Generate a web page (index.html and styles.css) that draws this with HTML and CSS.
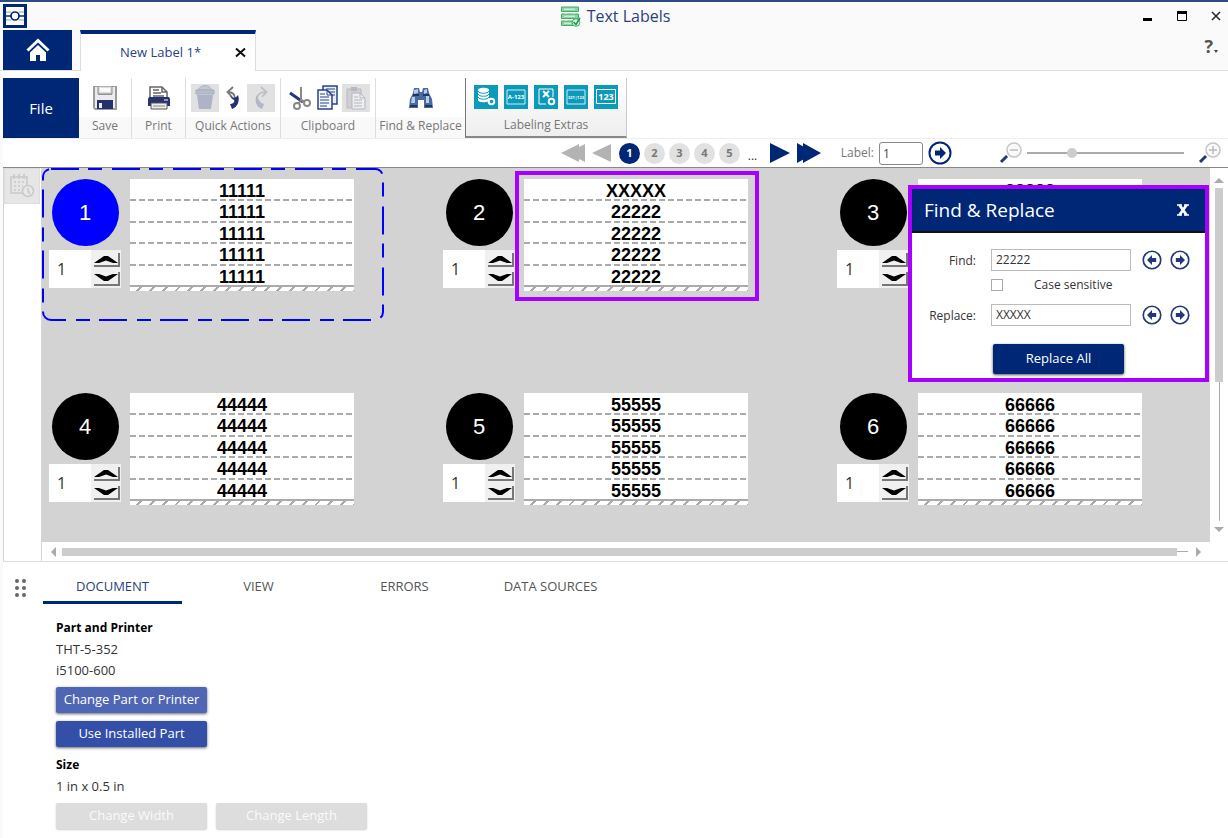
FILE: index.html
```html
<!DOCTYPE html>
<html lang="en">
<head>
<meta charset="utf-8">
<title>Text Labels</title>
<link rel="stylesheet" href="styles.css">
</head>
<body>
<svg width="0" height="0" class="defs" aria-hidden="true">
  <symbol id="up" viewBox="0 0 28 15"><path d="M0 0H28V15H0Z" fill="#f0f0f0"/><path d="M26 1V14H1" fill="none" stroke="#777" stroke-width="2"/><path d="M1 11 11 4H15L25 11H20L13 8.500 6 11Z"/></symbol>
  <symbol id="down" viewBox="0 0 28 15"><path d="M0 0H28V15H0Z" fill="#f0f0f0"/><path d="M26 1V14H1" fill="none" stroke="#777" stroke-width="2"/><path d="M1 3 11 10H15L25 3H20L13 5.500 6 3Z"/></symbol>
  <symbol id="right" viewBox="0 0 24 24"><circle cx="12" cy="12" r="10.500" fill="#fff" stroke="currentColor" stroke-width="2"/><path d="M7 9.500H12V6L18 12 12 18V14.500H7Z" fill="currentColor"/></symbol>
  <symbol id="left" viewBox="0 0 24 24"><circle cx="12" cy="12" r="10.500" fill="#fff" stroke="currentColor" stroke-width="2"/><path d="M17 9.500H12V6L6 12 12 18V14.500H17Z" fill="currentColor"/></symbol>
</svg>
<div class="app">
  <header class="titlebar">
    <svg class="logo" viewBox="0 0 24 24"><path d="M1.500 1.500H22.500V22.500H1.500Z" fill="#fff" stroke="#002776" stroke-width="3"/><path d="M3 8H8M3 16H8M16 8H21M16 16H21" stroke="#8a98bd" fill="none"/><circle cx="12" cy="12" r="4" fill="none" stroke="#002776" stroke-width="1.700"/><path d="M3 12H8M16 12H21" stroke="#002776" stroke-width="1.500"/></svg>
    <h1 class="title"><svg width="20" height="21" viewBox="0 0 20 21"><g fill="#8ed0a5" stroke="#3fae67"><path d="M.5 1H17.500V5.500H.5ZM.5 8H17.500V12.500H.5ZM.5 15H17.500V19.500H.5Z"/></g><path d="M3 3.200H14M3 10.200H14M3 17.200H10M5 6V8M13 6V8M5 13V15" stroke="#e7f6eb" fill="none"/><circle cx="15" cy="16.500" r="3.800" fill="#dff3e5" stroke="#3fae67"/><path d="M12.500 16 15 18.500 19 12" stroke="#23954c" stroke-width="1.500" fill="none"/></svg>Text Labels</h1>
    <div class="window-buttons">
      <button aria-label="Minimize"><svg viewBox="0 0 10 10"><path d="M0 7H9V10H0Z"/></svg></button>
      <button aria-label="Maximize"><svg viewBox="0 0 10 10"><path d="M.5 1H9.500V9.500H.5Z" fill="none" stroke="#000"/><path d="M0 0H10V3H0Z"/></svg></button>
      <button aria-label="Close"><svg viewBox="0 0 10 10"><path d="M1 1 9 9M9 1 1 9" stroke="#222" stroke-width="1.500"/></svg></button>
    </div>
  </header>
  <nav class="doc-tabs">
    <button class="home" aria-label="Home"><svg width="24" height="24" viewBox="0 0 24 24"><path d="M1.500 12.500 12 2.500 22.500 12.500" fill="none" stroke="#fff" stroke-width="3"/><path d="M12 7 20 14.500V23H14V17H10V23H4V14.500Z" fill="#fff"/></svg></button>
    <div class="doc-tab"><span>New Label 1*</span><button aria-label="Close tab"><svg width="11" height="11" viewBox="0 0 11 11"><path d="M1 1.500 10 9.500M10 1.500 1 9.500" stroke="#111" stroke-width="2"/></svg></button></div>
    <button class="help" aria-label="Help">?<svg width="4" height="3" viewBox="0 0 4 3"><path d="M0 0H4L2 3Z" fill="#444"/></svg></button>
  </nav>
  <div class="ribbon">
    <button class="file">File</button>
    <section class="group save"><div class="tools"><button aria-label="Save"><svg width="24" height="24" viewBox="0 0 24 24"><path d="M0 0H24V24H2L0 22Z" fill="#9b9b9b"/><path d="M2 1H5V9H19V1H22V22H2Z" fill="#ececec"/><path d="M5 0H19V8H5Z" fill="#ddd" stroke="#888"/><path d="M7 2H17V6H7Z" fill="#fafafa"/><path d="M4 14H20V23H4Z" fill="#25316f"/><path d="M6 17H9V22H6Z" fill="#eee"/></svg></button></div><p>Save</p></section>
    <section class="group print"><div class="tools"><button aria-label="Print"><svg width="24" height="24" viewBox="0 0 24 24"><path d="M3 12V1H15L20 6V12" fill="#fff" stroke="#666" stroke-width="1.500"/><path d="M15 1V6H20M6 4H12M6 7H14M6 10H17" fill="none" stroke="#666" stroke-width="1.500"/><path d="M2 11H22L23 13V20H1V13Z" fill="#26336f"/><path d="M17 14H21" stroke="#fff"/><path d="M4 17H20V23H4Z" fill="#eee" stroke="#555"/><path d="M6 20H18" stroke="#888"/></svg></button></div><p>Print</p></section>
    <section class="group quick"><div class="tools">
      <button class="off" disabled aria-label="Delete"><svg width="20" height="25" viewBox="0 0 20 25"><path d="M3 5C6-1 14-1 17 5Z" fill="#c5c8d1" stroke="#aeb3c2"/><path d="M1 5H19V9H1Z" fill="#b9bdca" stroke="#a7adbe"/><path d="M2 10H18L16 24H4Z" fill="#aeb3c5"/></svg></button>
      <button aria-label="Undo"><svg width="14" height="24" viewBox="0 0 14 24"><path d="M7 1 1.500 6 6 11M2 6C7 6 9 8 9 13" fill="none" stroke="#777" stroke-width="1.800"/><path d="M4 9C7 13 10 12 12 9C14 14 12 21 6 23L4 18C7 18 9 16 8 14C6 13 5 12 4 9Z" fill="#243273"/></svg></button>
      <button class="off" disabled aria-label="Redo"><svg width="14" height="24" viewBox="0 0 14 24"><path d="M7 1 12.500 6 8 11M12 6C7 6 3 8 3 13" fill="none" stroke="#bfc0c6" stroke-width="1.800"/><path d="M3 9C0 14 2 21 8 23L10 18C6 17 4 13 3 9Z" fill="#b3b6c4"/></svg></button>
    </div><p>Quick Actions</p></section>
    <section class="group clip"><div class="tools">
      <button aria-label="Cut"><svg width="22" height="24" viewBox="0 0 22 24"><path d="M1 7 14 16" stroke="#25377b" stroke-width="3"/><path d="M12 1V14L9 18M12 14 16 16" stroke="#888" stroke-width="2" fill="none"/><circle cx="8" cy="20" r="3" fill="#fff" stroke="#888" stroke-width="2"/><circle cx="18" cy="17" r="3" fill="#fff" stroke="#888" stroke-width="2"/></svg></button>
      <button aria-label="Copy"><svg width="22" height="25" viewBox="0 0 22 25"><path d="M6 1H20V19H6Z" fill="#e8eefb" stroke="#24428a" stroke-width="1.500"/><path d="M9 4H18M9 7H18M9 10H18" stroke="#24428a"/><path d="M1 5H10L15 10V24H1Z" fill="#f5f8ff" stroke="#24428a" stroke-width="1.500"/><path d="M10 5V10H15M3 9H8M3 12H12M3 15H12M3 18H12M3 21H10" fill="none" stroke="#24428a"/></svg></button>
      <button class="off" disabled aria-label="Paste"><svg width="20" height="24" viewBox="0 0 20 24"><path d="M1 3H15V22H1Z" fill="#d0d0d2" stroke="#b8b9bf"/><path d="M5 1H11V5H5Z" fill="#b8b9bf"/><path d="M6 7H14L19 12V23H6Z" fill="#eee" stroke="#b4b7c2"/><path d="M14 7V12H19M8 11H12M8 14H16M8 17H16M8 20H16" fill="none" stroke="#b4b7c2"/></svg></button>
    </div><p>Clipboard</p></section>
    <section class="group find"><div class="tools"><button aria-label="Find and replace"><svg width="24" height="22" viewBox="0 0 24 22"><path d="M5 1H10L11 5H13L14 1H19L20 6 23 12 24 21H15V13H9V21H0L1 12 4 6Z" fill="#496a9f"/><path d="M5 3 9 2 9 6 5 7ZM15 3 18 2 18 6 15 7ZM3 10H6V16H2ZM17 9H20V16H17Z" fill="#b8cbe8"/><path d="M1 19H8M16 19H23M4 8H10M14 8H20" stroke="#203764" stroke-width="2"/></svg></button></div><p>Find &amp; Replace</p></section>
    <section class="group extras"><div class="tools">
      <button aria-label="Data source"><svg width="24" height="24" viewBox="0 0 24 24"><path d="M0 0H24V24H0Z" fill="#0b9aba"/><path d="M4 5V15C4 18 15 18 15 15V5C15 2 4 2 4 5" fill="#fff"/><path d="M4 6C5 9 14 9 15 6M4 9C5 12 14 12 15 9M4 12C5 15 14 15 15 12" stroke="#0b9aba" fill="none"/><circle cx="17.500" cy="16.500" r="2.800" fill="#0b9aba" stroke="#fff" stroke-width="2"/></svg></button>
      <button aria-label="Alphanumeric"><svg width="24" height="24" viewBox="0 0 24 24"><path d="M0 0H24V24H0Z" fill="#0b9aba"/><path d="M3 5H21V19H3Z" fill="none" stroke="#cfeef5"/><text x="12" y="14" class="tiny">A-123</text></svg></button>
      <button aria-label="Import"><svg width="24" height="24" viewBox="0 0 24 24"><path d="M0 0H24V24H0Z" fill="#0b9aba"/><path d="M12 19H5V4H19V12" fill="none" stroke="#fff"/><path d="M9 6 15 12M15 6 9 12" stroke="#fff" stroke-width="2"/><circle cx="17.500" cy="16.500" r="2.800" fill="#0b9aba" stroke="#fff" stroke-width="2"/></svg></button>
      <button aria-label="Mirrored sequence"><svg width="24" height="24" viewBox="0 0 24 24"><path d="M0 0H24V24H0Z" fill="#0b9aba"/><path d="M3 5H21V19H3Z" fill="none" stroke="#cfeef5"/><text x="12" y="14" class="micro">321|123</text></svg></button>
      <button aria-label="Sequence"><svg width="24" height="24" viewBox="0 0 24 24"><path d="M0 0H24V24H0Z" fill="#0b9aba"/><path d="M2.500 4.500H21.500V18.500H2.500Z" fill="none" stroke="#fff"/><text x="12" y="15" class="digits">123</text></svg></button>
    </div><p>Labeling Extras</p></section>
  </div>
  <div class="pager">
    <div class="pages">
      <button class="gray" aria-label="First page"><svg width="24" height="18" viewBox="0 0 24 18"><path d="M0 9 18 0V18ZM6 9 24 0V18Z"/></svg></button>
      <button class="gray" aria-label="Previous page"><svg width="20" height="18" viewBox="0 0 20 18"><path d="M0 9 19 0V18Z"/></svg></button>
      <button class="page current">1</button><button class="page">2</button><button class="page">3</button><button class="page">4</button><button class="page">5</button>
      <span class="more">...</span>
      <button class="navy" aria-label="Next page"><svg width="20" height="20" viewBox="0 0 20 20"><path d="M0 0 20 10 0 20Z"/></svg></button>
      <button class="navy" aria-label="Last page"><svg width="24" height="20" viewBox="0 0 24 20"><path d="M0 0 18 10 0 20ZM6 0 24 10 6 20Z"/></svg></button>
    </div>
    <div class="jump"><label for="jump">Label:</label><input type="text" id="jump" value="1"><button class="go" aria-label="Go to label"><svg width="24" height="24"><use href="#right"/></svg></button></div>
    <div class="zoom">
      <button aria-label="Zoom out"><svg width="24" height="24" viewBox="0 0 24 24"><path d="M2 21 8 15" stroke="#25377b" stroke-width="3"/><circle cx="15" cy="9" r="7" fill="#fafafa" stroke="#c4c4c4" stroke-width="1.500"/><path d="M11 9H19" stroke="#bbb" stroke-width="1.500"/></svg></button>
      <input type="range" aria-label="Zoom" min="0" max="100" value="27">
      <button class="zoom-in" aria-label="Zoom in"><svg width="24" height="24" viewBox="0 0 24 24"><path d="M2 21 8 15" stroke="#25377b" stroke-width="3"/><circle cx="15" cy="9" r="7" fill="#fafafa" stroke="#c4c4c4" stroke-width="1.500"/><path d="M11 9H19M15 5V13" stroke="#bbb" stroke-width="1.500"/></svg></button>
    </div>
  </div>
  <main class="workspace">
    <aside class="rail"><button disabled aria-label="Schedule"><svg width="26" height="24" viewBox="0 0 26 24"><g fill="none" stroke="#c9c9c9" stroke-width="1.500"><path d="M14 19H2V3H18V12M5 0V5M10 0V5M15 0V5"/><path d="M5 8H16M5 12H14M5 16H12" stroke-dasharray="2 2"/><circle cx="19" cy="17" r="5.500" fill="#e8e8e8"/><path d="M19 14V17L21 20"/></g></svg></button></aside>
    <div class="canvas">
      <div class="labels">
        <article class="card selected">
          <svg class="selection" aria-hidden="true"><rect x="1" y="1" width="340" height="151" rx="8"/></svg>
          <div class="side"><b class="badge">1</b><div class="count"><input type="text" aria-label="Copies of label 1" value="1"><div class="steps"><button aria-label="More"><svg><use href="#up"/></svg></button><button aria-label="Fewer"><svg><use href="#down"/></svg></button></div></div></div>
          <div class="label"><ul><li>11111</li><li>11111</li><li>11111</li><li>11111</li><li>11111</li></ul><div class="hatch"></div></div>
        </article>
        <article class="card">
          <div class="side"><b class="badge">2</b><div class="count"><input type="text" aria-label="Copies of label 2" value="1"><div class="steps"><button aria-label="More"><svg><use href="#up"/></svg></button><button aria-label="Fewer"><svg><use href="#down"/></svg></button></div></div></div>
          <div class="label marked"><ul><li>XXXXX</li><li>22222</li><li>22222</li><li>22222</li><li>22222</li></ul><div class="hatch"></div></div>
        </article>
        <article class="card">
          <div class="side"><b class="badge">3</b><div class="count"><input type="text" aria-label="Copies of label 3" value="1"><div class="steps"><button aria-label="More"><svg><use href="#up"/></svg></button><button aria-label="Fewer"><svg><use href="#down"/></svg></button></div></div></div>
          <div class="label"><ul><li>33333</li><li></li><li></li><li></li><li></li></ul><div class="hatch"></div></div>
        </article>
        <article class="card">
          <div class="side"><b class="badge">4</b><div class="count"><input type="text" aria-label="Copies of label 4" value="1"><div class="steps"><button aria-label="More"><svg><use href="#up"/></svg></button><button aria-label="Fewer"><svg><use href="#down"/></svg></button></div></div></div>
          <div class="label"><ul><li>44444</li><li>44444</li><li>44444</li><li>44444</li><li>44444</li></ul><div class="hatch"></div></div>
        </article>
        <article class="card">
          <div class="side"><b class="badge">5</b><div class="count"><input type="text" aria-label="Copies of label 5" value="1"><div class="steps"><button aria-label="More"><svg><use href="#up"/></svg></button><button aria-label="Fewer"><svg><use href="#down"/></svg></button></div></div></div>
          <div class="label"><ul><li>55555</li><li>55555</li><li>55555</li><li>55555</li><li>55555</li></ul><div class="hatch"></div></div>
        </article>
        <article class="card">
          <div class="side"><b class="badge">6</b><div class="count"><input type="text" aria-label="Copies of label 6" value="1"><div class="steps"><button aria-label="More"><svg><use href="#up"/></svg></button><button aria-label="Fewer"><svg><use href="#down"/></svg></button></div></div></div>
          <div class="label"><ul><li>66666</li><li>66666</li><li>66666</li><li>66666</li><li>66666</li></ul><div class="hatch"></div></div>
        </article>
      </div>
      <form class="dialog" role="dialog" aria-labelledby="dialog-title">
        <header><h2 id="dialog-title">Find &amp; Replace</h2><button type="button" aria-label="Close dialog"><svg width="12" height="12" viewBox="0 0 12 12"><path d="M0 1H5M7 1H12M0 11H5M7 11H12" stroke="#fff" stroke-width="1.500"/><path d="M2.500 1 9.500 11M9.500 1 2.500 11" stroke="#fff" stroke-width="2.800"/></svg></button></header>
        <div class="fields">
          <label for="find">Find:</label><input type="text" id="find" value="22222"><div class="arrows"><button type="button" aria-label="Find previous"><svg><use href="#left"/></svg></button><button type="button" aria-label="Find next"><svg><use href="#right"/></svg></button></div>
          <div class="case"><input type="checkbox" id="case"><label for="case">Case sensitive</label></div>
          <label for="replace">Replace:</label><input type="text" id="replace" value="XXXXX"><div class="arrows"><button type="button" aria-label="Replace previous"><svg><use href="#left"/></svg></button><button type="button" aria-label="Replace next"><svg><use href="#right"/></svg></button></div>
        </div>
        <button type="button" class="replace-all">Replace All</button>
      </form>
    </div>
    <div class="vscroll"><i class="tri-up"></i><span class="thumb"></span><span class="line"></span><i class="tri-down"></i></div>
    <div class="hscroll"><i class="tri-left"></i><span class="thumb"></span><span class="line"></span><i class="tri-right"></i></div>
  </main>
  <section class="panel">
    <div class="panel-tabs">
      <svg class="grip" width="14" height="20" viewBox="0 0 14 20" fill="#666"><circle cx="3" cy="3" r="2"/><circle cx="10" cy="3" r="2"/><circle cx="3" cy="10" r="2"/><circle cx="10" cy="10" r="2"/><circle cx="3" cy="17" r="2"/><circle cx="10" cy="17" r="2"/></svg>
      <button class="active">DOCUMENT</button><button>VIEW</button><button>ERRORS</button><button>DATA SOURCES</button>
    </div>
    <div class="details">
      <h3>Part and Printer</h3>
      <p>THT-5-352</p>
      <p>i5100-600</p>
      <button class="action light">Change Part or Printer</button>
      <button class="action">Use Installed Part</button>
      <h3 class="size">Size</h3>
      <p>1 in x 0.5 in</p>
      <div class="pair"><button class="action" disabled>Change Width</button><button class="action" disabled>Change Length</button></div>
    </div>
  </section>
</div>
</body>
</html>
```

FILE: styles.css
```css
:root {
  --navy: #002776;
  --mark: #a600ff;
}
* { box-sizing: border-box; }
body {
  margin: 0;
  background: #fff;
  color: #333;
  font: 12px/16px "Open Sans", "Noto Sans", sans-serif;
}
button, input { font: inherit; color: inherit; margin: 0; padding: 0; border: 0; background: none; }
h1, h2, h3, p, ul { margin: 0; padding: 0; font-weight: 400; }
svg { display: block; }
.defs { position: absolute; }
.app { min-height: 100vh; padding-left: 3px; overflow: hidden; background: linear-gradient(90deg, #fafafa 3px, #fff 3px); }

/* title bar */
.titlebar {
  display: grid;
  grid-template-columns: 1fr auto 1fr;
  align-items: center;
  height: 30px;
  margin-left: -3px;
  padding-left: 3px;
  border-top: 2px solid #2b4a86;
  background: #fafafa;
}
.logo { width: 24px; height: 24px; }
.title { display: flex; align-items: center; gap: 6px; font-size: 16px; line-height: 22px; color: #2b3f80; }
.window-buttons { display: flex; justify-content: flex-end; gap: 24px; padding-right: 7px; }
.window-buttons svg { width: 10px; height: 10px; }

/* document tabs */
.doc-tabs {
  display: flex;
  align-items: flex-end;
  height: 41px;
  margin-left: -3px;
  padding-left: 3px;
  border-bottom: 1px solid #ddd;
  background: #fafafa;
}
.home { display: grid; place-items: center; width: 69px; height: 40px; background: var(--navy); }
.doc-tab {
  display: flex;
  justify-content: space-between;
  align-items: center;
  width: 176px;
  height: 41px;
  margin: 0 0 -1px 8px;
  padding: 0 9px 1px 39px;
  border: solid #ddd;
  border-width: 0 1px;
  border-top: 4px solid var(--navy);
  background: #fff;
  color: #2b3f80;
  font-size: 13px;
}
.help { display: flex; align-items: flex-end; gap: 1px; margin: 0 10px 12px auto; color: #555; font-size: 18px; font-weight: 700; line-height: 24px; }
.help svg { margin-bottom: 5px; }

/* ribbon */
.ribbon { display: flex; height: 68px; padding-top: 7px; border-bottom: 1px solid #eee; }
.file { width: 76px; background: var(--navy); color: #fff; font-size: 15px; }
.group { display: flex; flex-direction: column; border-right: 1px solid #ddd; }
.group p { height: 21px; padding-top: 1px; background: #f9f9f9; color: #777; text-align: center; white-space: nowrap; }
.tools { display: flex; flex: 1; justify-content: center; align-items: center; }
.tools button { display: grid; place-items: center; width: 28px; height: 28px; }
.tools .off { background: #e1e1e1; }
.save { width: 53px; }
.print { width: 54px; }
.quick, .clip { width: 95px; }
.find { width: 89px; border: 0; }
.extras { width: 162px; border: 0; border-right: 1px solid #ccc; border-left: 1px solid #777; border-bottom: 2px solid #888; background: linear-gradient(#fff, #eee); }
.extras .tools { gap: 2px; }
.extras p { height: 20px; background: none; }
.tiny, .micro, .digits { fill: #fff; text-anchor: middle; font-family: "Open Sans", sans-serif; font-weight: 700; }
.tiny { font-size: 6px; }
.micro { font-size: 4px; }
.digits { font-size: 9px; }

/* pager */
.pager { display: flex; justify-content: flex-end; align-items: center; height: 29px; padding-right: 6px; border-bottom: 1px solid #888; }
.pages { display: flex; align-items: center; gap: 4px; }
.gray { margin-right: 3px; fill: #b3b3b3; }
.navy { margin-right: 3px; fill: var(--navy); }
.page { width: 21px; height: 21px; border-radius: 50%; background: #e1e1e1; color: #777; font-size: 11px; font-weight: 700; }
.page.current { background: var(--navy); color: #fff; }
.more { align-self: flex-end; width: 22px; padding-left: 4px; }
.jump { display: flex; align-items: center; gap: 5px; margin-left: 17px; color: #777; }
.jump input { width: 44px; height: 23px; padding-left: 3px; border: 1px solid #888; border-radius: 3px; background: #fff; color: #444; }
.jump .go { color: var(--navy); }
.zoom { display: flex; align-items: center; gap: 4px; margin-left: 47px; }
.zoom input { appearance: none; width: 157px; height: 12px; background: linear-gradient(#aaa, #aaa) center / 100% 2px no-repeat; }
.zoom input::-webkit-slider-thumb { appearance: none; width: 10px; height: 10px; border-radius: 50%; background: #ccc; }
.zoom-in { margin-left: 10px; }

/* workspace */
.workspace {
  display: grid;
  grid-template: 374px 19px / 39px 1fr 18px;
  border-bottom: 1px solid #ddd;
}
.rail { grid-row: 1 / 3; border: solid #d5d5d5; border-width: 0 1px; }
.rail button { display: grid; place-items: center; width: 36px; height: 36px; border: 1px solid #ddd; background: #e6e6e6; }
.canvas { position: relative; background: #d3d3d3; }
.labels { display: grid; grid-template-columns: repeat(auto-fill, 342px); gap: 61px 52px; }
.card { position: relative; display: flex; gap: 9px; height: 153px; padding: 11px 0 0 7px; }
.selection { position: absolute; inset: 0; width: 342px; height: 153px; }
.selection rect { fill: none; stroke: #00f; stroke-width: 2; stroke-dasharray: 28 9 14 10; }
.side { display: flex; flex-direction: column; align-items: center; gap: 4px; width: 72px; }
.badge { display: grid; place-items: center; width: 67px; height: 67px; border-radius: 50%; background: #000; color: #fff; font: 22px "Liberation Sans", Arial, sans-serif; }
.selected .badge { background: #00f; }
.count { display: flex; width: 72px; height: 38px; background: #fff; }
.count input { width: 42px; padding-left: 8px; font-size: 16px; }
.steps { display: flex; flex-direction: column; align-items: flex-end; justify-content: space-around; width: 30px; background: #f0f0f0; }
.steps svg { width: 28px; height: 15px; }
.label { position: relative; width: 224px; height: 112px; }
.label ul { display: grid; grid-template-rows: repeat(5, 1fr); height: 108px; padding-top: 1px; background: #fff; list-style: none; }
.label li { padding-top: 1px; background: repeating-linear-gradient(90deg, #aaa 0 6px, #fff 6px 9px) bottom / 100% 2px no-repeat; color: #000; font: 700 18px/20px "Liberation Sans", Arial, sans-serif; text-align: center; }
.label li:last-child { background: linear-gradient(#aaa, #aaa) bottom / 100% 2px no-repeat; }
.hatch { height: 4px; background: repeating-linear-gradient(135deg, #fff 0 7px, #aaa 7px 9px); }
.marked::after { content: ""; position: absolute; inset: -8px -11px -10px -9px; border: 4px solid var(--mark); }

/* scroll bars */
.vscroll { display: flex; flex-direction: column; align-items: center; padding: 10px 0; }
.vscroll .thumb { width: 8px; height: 194px; margin-top: 5px; background: #ccc; }
.vscroll .line { flex: 1; width: 1px; margin-bottom: 6px; background: #aaa; }
.hscroll { display: flex; align-items: center; padding: 0 9px; }
.hscroll .thumb { flex: 1; height: 8px; margin-left: 6px; background: #ccc; }
.hscroll .line { width: 11px; height: 1px; margin-right: 8px; background: #aaa; }
.tri-up, .tri-down { border: 5px solid transparent; border-top-width: 0; border-bottom-color: #aaa; }
.tri-down { border-width: 5px 5px 0; border-top-color: #aaa; }
.tri-left, .tri-right { border: 5px solid transparent; border-left-width: 0; border-right-color: #aaa; }
.tri-right { border-width: 5px 0 5px 5px; border-left-color: #aaa; }

/* find and replace dialog */
.dialog { position: absolute; top: 17px; right: 1px; width: 301px; height: 197px; border: 4px solid var(--mark); background: #fff; }
.dialog header { display: flex; justify-content: space-between; align-items: center; height: 44px; padding: 0 16px 0 12px; border-bottom: 2px solid #111; background: var(--navy); color: #fff; }
.dialog h2 { font-size: 19px; line-height: 24px; }
.fields { display: grid; grid-template-columns: 68px 140px 48px; align-items: center; column-gap: 11px; padding-top: 16px; }
.fields > label { padding: 2px 4px 0 0; text-align: right; }
.fields > input { height: 22px; padding: 0 0 2px 4px; border: 1px solid #bbb; }
.arrows { display: flex; gap: 8px; color: #25377b; }
.arrows svg { width: 20px; height: 20px; }
.case { grid-column: 2 / 4; display: flex; align-items: center; gap: 31px; height: 33px; padding-bottom: 5px; white-space: nowrap; }
.case input { appearance: none; width: 12px; height: 12px; border: 1px solid #aaa; background: #fff; }
.replace-all { display: block; width: 131px; height: 30px; margin: 18px 0 0 81px; padding-bottom: 2px; border-radius: 2px; background: var(--navy); box-shadow: 0 1px 3px #555; color: #fff; font-size: 13px; }

/* bottom panel */
.panel-tabs { display: flex; align-items: center; gap: 7px; height: 42px; padding-left: 11px; }
.grip { margin: 10px 8px 0 0; }
.panel-tabs button { width: 139px; height: 34px; margin-top: 8px; border-bottom: 3px solid transparent; color: #555; font-size: 13px; }
.panel-tabs .active { border-color: var(--navy); color: #2b3f80; }
.details { display: flex; flex-direction: column; align-items: flex-start; padding: 13px 0 8px 53px; }
.details h3 { color: #000; font-size: 12px; font-weight: 700; line-height: 22px; }
.details .size { margin-top: 5px; }
.details p { font-size: 13px; line-height: 21px; }
.action { width: 151px; height: 26px; margin: 6px 0 2px; padding-bottom: 2px; border-radius: 2px; background: #344fa8; box-shadow: 0 1px 3px #666; color: #fff; font-size: 13px; white-space: nowrap; }
.action.light { background: #4f66b5; }
.action:disabled { background: #ddd; box-shadow: 0 1px 2px #ccc; color: #fafafa; }
.pair { display: flex; gap: 9px; }
```
